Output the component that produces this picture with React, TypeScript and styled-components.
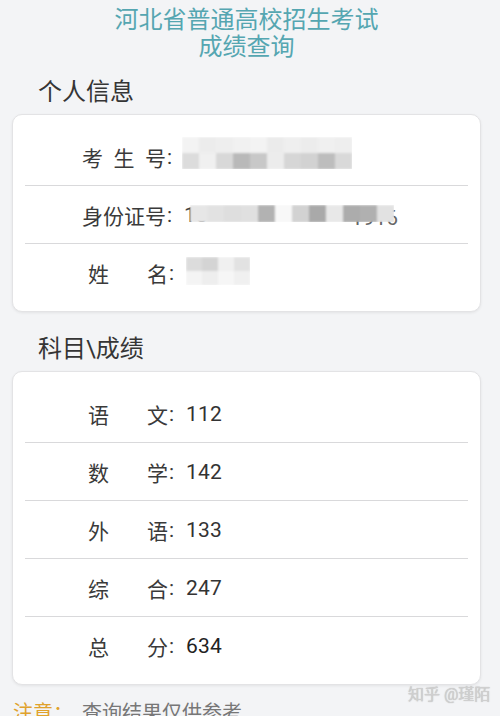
import React from "react";
import styled, { createGlobalStyle } from "styled-components";

const GlobalStyle = createGlobalStyle`
  html, body {
    margin: 0;
    padding: 0;
    background: #f3f4f6;
    font-family: Roboto, "Noto Sans CJK SC", "Noto Sans", sans-serif;
    color: #333;
  }
  * { box-sizing: border-box; }
`;

const Page = styled.div`
  position: relative;
  padding: 7px 19px 0 12px;
`;

const Title = styled.h1`
  margin: 0;
  text-align: center;
  font-size: 24px;
  line-height: 27px;
  font-weight: 400;
  color: #55a6b1;
`;

const SectionTitle = styled.h2<{ $top: number }>`
  margin: ${(p) => p.$top}px 0 7px 0;
  padding-left: 26px;
  font-size: 24px;
  line-height: 30px;
  font-weight: 400;
  color: #353535;
`;

const Card = styled.div`
  background: #ffffff;
  border: 1px solid #e3e3e5;
  border-radius: 10px;
  box-shadow: 0 1px 3px rgba(0, 0, 0, 0.07);
  padding: 13px 12px 10px 12px;
`;

const Row = styled.div`
  display: flex;
  align-items: center;
  height: 58px;
  padding-left: 57px;
  border-bottom: 1px solid #d9d9db;
  font-size: 21px;
  color: #333;
  &:last-child {
    border-bottom: none;
    height: 57px;
  }
`;

const Label = styled.div<{ $inset: number; $w: number }>`
  display: flex;
  justify-content: space-between;
  margin-left: ${(p) => p.$inset}px;
  width: ${(p) => p.$w}px;
  color: #3a3a3a;
`;

const Colon = styled.span`
  margin-left: 1px;
  color: #3a3a3a;
`;

const Value = styled.span<{ $strong?: boolean }>`
  margin-left: 12px;
  color: ${(p) => (p.$strong ? "#222" : "#333")};
  letter-spacing: 0.2px;
`;

const MosaicBox = styled.div<{ $dy: number; $dx: number }>`
  display: flex;
  margin-left: ${(p) => p.$dx}px;
  transform: translateY(${(p) => p.$dy}px);
`;

const IdValue = styled.div`
  position: relative;
  display: flex;
  justify-content: space-between;
  width: 214px;
  margin-left: 12px;
  color: #444;
`;

const IdOverlay = styled.div`
  position: absolute;
  left: 6px;
  top: 0;
`;

const FadedDigits = styled.span`
  color: #666;
  transform: translateY(3px);
`;

const Footer = styled.div`
  margin-top: 14px;
  padding-left: 1px;
  font-size: 20px;
  line-height: 28px;
  display: flex;
`;

const Note = styled.span`
  color: #e0a22c;
`;

const NoteText = styled.span`
  margin-left: 9px;
  color: #777;
`;

const Watermark = styled.div`
  position: absolute;
  left: 408px;
  top: 686px;
  font-size: 16px;
  line-height: 18px;
  color: #cfcfcf;
  text-shadow: 0 0 1px rgba(120, 120, 120, 0.5);
  white-space: nowrap;
`;

type MosaicProps = { cells: string[][]; cw: number; ch: number; id: string };

const Mosaic: React.FC<MosaicProps> = ({ cells, cw, ch, id }) => {
  const cols = Math.max(...cells.map((r) => r.length));
  const w = cols * cw;
  const h = cells.length * ch;
  return (
    <svg width={w} height={h} viewBox={`0 0 ${w} ${h}`}>
      <defs>
        <filter id={id} x="-5%" y="-10%" width="110%" height="120%">
          <feGaussianBlur stdDeviation="0.9" />
        </filter>
      </defs>
      <g filter={`url(#${id})`}>
        {cells.map((row, ri) =>
          row.map((c, ci) => (
            <rect key={`${ri}-${ci}`} x={ci * cw} y={ri * ch} width={cw + 0.5} height={ch + 0.5} fill={c} />
          ))
        )}
      </g>
    </svg>
  );
};

const examCells = [
  ["#f3f3f3", "#ececec", "#eeeeee", "#f1f1f1", "#f3f3f3", "#ebebeb", "#efefef", "#ececec", "#f0f0f0", "#eeeeee"],
  ["#dcdcdc", "#f0f0f0", "#d8d8d8", "#b9b9b9", "#c8c8c8", "#ececec", "#d6d6d6", "#d2d2d2", "#bdbdbd", "#d9d9d9"],
];

const idCells = [
  ["#e6e6e6", "#e2e2e2", "#dedede", "#e0e0e0", "#b2b2b2", "#f8f8f8", "#d2d2d2", "#a9a9a9", "#e8e8e8", "#acacac", "#b0b0b0", "#e2e2e2"],
];

const nameCells = [
  ["#dcdcdc", "#d4d4d4", "#f0f0f0", "#e2e2e2"],
  ["#f4f4f4", "#eeeeee", "#f6f6f6", "#f0f0f0"],
];

type Score = { a: string; b: string; v: string; strong?: boolean };

const scores: Score[] = [
  { a: "语", b: "文", v: "112" },
  { a: "数", b: "学", v: "142" },
  { a: "外", b: "语", v: "133" },
  { a: "综", b: "合", v: "247" },
  { a: "总", b: "分", v: "634", strong: true },
];

export default function App() {
  return (
    <>
      <GlobalStyle />
      <Page>
        <Title>
          河北省普通高校招生考试
          <br />
          成绩查询
        </Title>

        <SectionTitle $top={16}>个人信息</SectionTitle>
        <Card>
          <Row>
            <Label $inset={0} $w={84}>
              <span>考</span>
              <span>生</span>
              <span>号</span>
            </Label>
            <Colon>:</Colon>
            <MosaicBox $dx={10} $dy={-4}>
              <Mosaic id="m1" cells={examCells} cw={17} ch={16} />
            </MosaicBox>
          </Row>
          <Row>
            <Label $inset={0} $w={84}>
              <span>身</span>
              <span>份</span>
              <span>证</span>
              <span>号</span>
            </Label>
            <Colon>:</Colon>
            <IdValue>
              <span>13</span>
              <FadedDigits>1916</FadedDigits>
              <IdOverlay>
                <Mosaic id="m2" cells={idCells} cw={17} ch={17} />
              </IdOverlay>
            </IdValue>
          </Row>
          <Row>
            <Label $inset={6} $w={80}>
              <span>姓</span>
              <span>名</span>
            </Label>
            <Colon>:</Colon>
            <MosaicBox $dx={12} $dy={-2}>
              <Mosaic id="m3" cells={nameCells} cw={16} ch={14} />
            </MosaicBox>
          </Row>
        </Card>

        <SectionTitle $top={22}>科目\成绩</SectionTitle>
        <Card>
          {scores.map((s) => (
            <Row key={s.a + s.b}>
              <Label $inset={6} $w={80}>
                <span>{s.a}</span>
                <span>{s.b}</span>
              </Label>
              <Colon>:</Colon>
              <Value $strong={s.strong}>{s.v}</Value>
            </Row>
          ))}
        </Card>

        <Footer>
          <Note>注意：</Note>
          <NoteText>查询结果仅供参考</NoteText>
        </Footer>

        <Watermark>知乎 @瑾陌</Watermark>
      </Page>
    </>
  );
}
